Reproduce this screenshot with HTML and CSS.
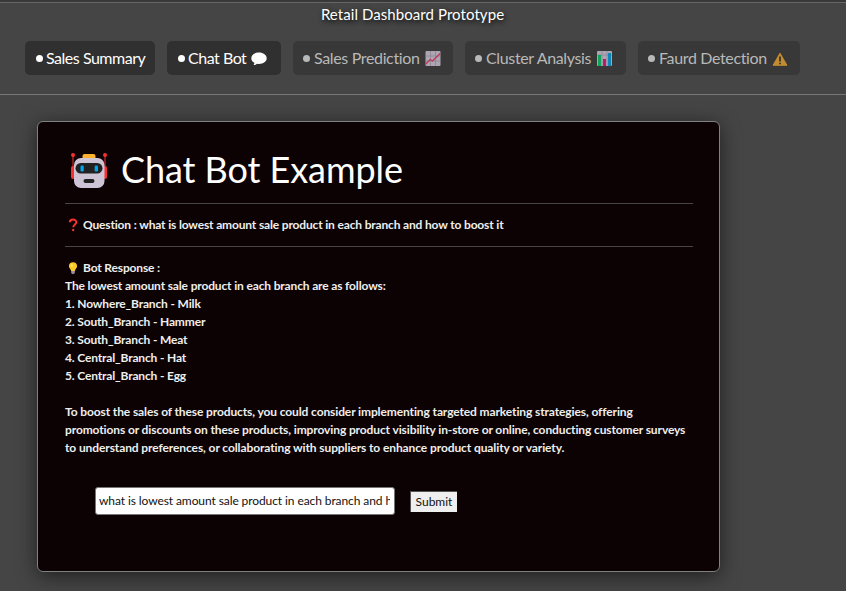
FILE: index.html
```html
<!DOCTYPE html>
<html lang="en">
<head>
<meta charset="utf-8">
<title>Retail Dashboard Prototype</title>
<link rel="stylesheet" href="styles.css">
</head>
<body>
<header class="header">
  <div class="brand">Retail Dashboard Prototype</div>
  <nav class="menu">
    <a class="item sales"><i class="dot"></i><span>Sales Summary</span></a>
    <a class="item chat"><i class="dot"></i><span>Chat Bot</span>
      <svg class="icon" viewBox="0 0 16 16"><path fill="#fff" d="M8 2.500c4.300 0 7.700 2.600 7.700 5.700s-3.400 5.700-7.700 5.700q-1 0-2-.2-1.300 1.300-3.500 1.300.9-.9.900-2.200C1.500 11.800.3 10.100.3 8.200c0-3.100 3.400-5.700 7.700-5.700z"/></svg></a>
    <a class="item prediction disabled"><i class="dot"></i><span>Sales Prediction</span>
      <svg class="icon" viewBox="0 0 16 16"><rect x=".5" y="1" width="15" height="15" rx="1" fill="#e0d4e8"/><path d="M.5 6h15M.5 11h15M5.500 1v15M10.500 1v15" stroke="#a298ae" stroke-width=".6"/><path d="M.8 14 5.200 9.500l2.300 1.500L15.200 3.500" fill="none" stroke="#f8315a" stroke-width="1.200"/></svg></a>
    <a class="item cluster disabled"><i class="dot"></i><span>Cluster Analysis</span>
      <svg class="icon" viewBox="0 0 16 16"><rect x="0" y="1" width="15" height="15" rx="1" fill="#e0d4e8"/><path d="M0 5h15M5 1v15M10 1v15" stroke="#a298ae" stroke-width=".6"/><path fill="#00d26a" d="M1 5h3v11H1z"/><path fill="#f70a8d" d="M6 9h3v7H6z"/><path fill="#00a6ed" d="M11 3h3v13h-3z"/></svg></a>
    <a class="item fraud disabled"><i class="dot"></i><span>Faurd Detection</span>
      <svg class="icon" viewBox="0 0 16 16"><path fill="#ffb02e" stroke="#ffb02e" stroke-linejoin="round" d="M8 3.200 15 15.300H1z"/><path fill="#222" d="M7.200 6.500h1.600v5H7.200zM7.200 12.700h1.600v1.600H7.200z"/></svg></a>
  </nav>
</header>
<main class="card">
  <h1 class="title">
    <svg class="robot" viewBox="0 0 38 38"><path d="M3 3v20M35 3v20" stroke="#f8312f"/><circle cx="3" cy="3" r="2" fill="#f8312f"/><circle cx="35" cy="3" r="2" fill="#f8312f"/><rect x="1" y="14" width="4" height="13" rx="2" fill="#f8312f"/><rect x="33" y="14" width="4" height="13" rx="2" fill="#f8312f"/><rect x="12.500" y="2" width="13" height="7" rx="2" fill="#ffb02e"/><rect x="4" y="6" width="30.500" height="30" rx="7" fill="#cdc4d6"/><rect x="5.500" y="11" width="27" height="10.500" rx="5.200" fill="#212121"/><rect x="10.500" y="13.500" width="3.300" height="6" rx="1.300" fill="#00a6ed"/><rect x="24.700" y="13.500" width="3.300" height="6" rx="1.300" fill="#00a6ed"/><rect x="13.500" y="27" width="11" height="4" rx="2" fill="#212121"/></svg>
    <span>Chat Bot Example</span>
  </h1>
  <p class="question">
    <svg class="small-icon" viewBox="0 0 14 14"><path d="M3.800 4.300C3.800.6 10.300.7 10.300 4.200c0 2.300-2.900 2.500-3 5" fill="none" stroke="#f8312f" stroke-width="2"/><circle cx="7.200" cy="12" r="1.200" fill="#f8312f"/></svg><span>Question : what is lowest amount sale product in each branch and how to boost it</span>
  </p>
  <section class="response">
    <div class="label"><svg class="small-icon" viewBox="0 0 14 14"><path fill="#fcc928" d="M7 1.200c2.400 0 4.100 1.600 4.100 3.800 0 2.100-2 3.100-2.200 5H5.100C4.900 8.100 2.900 7.100 2.900 5c0-2.200 1.700-3.800 4.100-3.800z"/><path fill="#ffe777" d="M5 3h1.500v3H5z"/><path fill="#998ea4" d="M5.200 10h3.600v2.300L7 13.300l-1.800-1z"/></svg><span>Bot Response :</span></div>
    <div>The lowest amount sale product in each branch are as follows:</div>
    <div>1. Nowhere_Branch - Milk</div>
    <div>2. South_Branch - Hammer</div>
    <div>3. South_Branch - Meat</div>
    <div>4. Central_Branch - Hat</div>
    <div>5. Central_Branch - Egg</div>
    <p class="advice">To boost the sales of these products, you could consider implementing targeted marketing strategies, offering<br>promotions or discounts on these products, improving product visibility in-store or online, conducting customer surveys<br><span class="last">to understand preferences, or collaborating with suppliers to enhance product quality or variety.</span></p>
  </section>
  <form class="form">
    <input class="prompt" type="text" value="what is lowest amount sale product in each branch and how to boost it">
    <button class="submit" type="button">Submit</button>
  </form>
</main>
</body>
</html>
```
FILE: styles.css
```css
* { box-sizing: border-box; }
body { margin: 0; height: 591px; overflow: hidden; background: #454545; color: #fff; font-family: Lato, sans-serif; }
.header { height: 95px; border-top: 2px solid #393939; border-bottom: 1px solid #777; }
.brand { height: 39px; border-top: 1px solid #666; padding-right: 21px; text-align: center; font-size: 15px; line-height: 22px; letter-spacing: .07px; text-shadow: 1px 2px 5px #000; }
.menu { display: flex; gap: 12px; padding-left: 25px; }
.item { display: flex; align-items: center; height: 34px; padding-left: 11px; border-radius: 5px; background: #303030; font-size: 16px; line-height: 34px; letter-spacing: -.48px; white-space: nowrap; }
.item.disabled { padding-left: 10px; background: #383838; color: #b9b9b9; letter-spacing: -.35px; }
.sales { width: 130px; }
.chat { width: 114px; }
.prediction { width: 160px; }
.cluster { width: 161px; }
.fraud { width: 162px; }
.dot { flex: none; width: 7px; height: 7px; margin: 1px 4px 0 0; border-radius: 50%; background: currentColor; }
.sales .dot { margin-right: 3px; }
.chat .dot { margin-right: 3px; }
.icon { flex: none; width: 16px; height: 16px; margin-left: 5px; }
.cluster .icon { margin-left: 6px; }
.disabled .icon { opacity: .7; }
.card { width: 683px; height: 451px; margin: 26px 0 0 37px; padding: 24px 26px 0 27px; border: 1px solid #808080; border-radius: 6px; background: #0c0203; box-shadow: 0 4px 20px rgba(0, 0, 0, .55); }
.title { display: flex; align-items: center; height: 58px; margin: 0; padding: 0 0 8px 5px; border-bottom: 1px solid #494545; font-size: 36px; font-weight: 400; line-height: 48px; letter-spacing: -.07px; }
.title span { padding-bottom: 3px; }
.robot { width: 38px; height: 38px; margin-right: 13px; }
.question { display: flex; align-items: center; height: 43px; margin: 0; padding-bottom: 1px; border-bottom: 1px solid #494545; font-size: 12px; font-weight: 700; letter-spacing: -.16px; color: #eee; }
.small-icon { width: 14px; height: 14px; margin: 0 3px 0 1px; }
.response { padding-top: 12px; font-size: 12px; line-height: 18px; font-weight: 700; letter-spacing: -.15px; color: #eee; }
.label { display: flex; align-items: center; height: 18px; }
.advice { margin: 18px 0 0; letter-spacing: -.115px; white-space: nowrap; }
.last { letter-spacing: -.1px; }
.form { display: flex; align-items: center; gap: 15px; margin: 30px 0 0 30px; }
.prompt { width: 300px; height: 28px; padding: 0 4px 1px 3px; border: 1px solid #767676; border-radius: 3px; background: #fff; color: #111; font: 12px Lato, sans-serif; letter-spacing: -.09px; }
.submit { width: 47px; height: 21px; padding: 0 0 1px; border: 0 solid #555; border-width: 1px 0 0 1px; border-radius: 0; background: #efefef; color: #111; font: 12px Lato, sans-serif; }
```
